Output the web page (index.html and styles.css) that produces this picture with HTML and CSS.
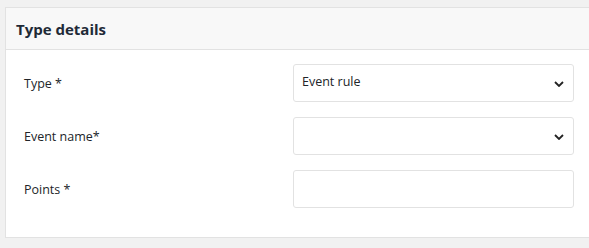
FILE: index.html
```html
<!DOCTYPE html>
<html>
<head>
<meta charset="utf-8">
<link rel="stylesheet" href="styles.css">
</head>
<body>
<div class="card">
  <div class="card-header">Type details</div>
  <div class="card-body">
    <label class="label">Type *</label>
    <div class="select">
      <span class="value">Event rule</span>
      <svg class="chev" width="10" height="6" viewBox="0 0 10 6"><path d="M1 1 L5 5 L9 1" fill="none" stroke="#222" stroke-width="1.8"/></svg>
    </div>
    <label class="label">Event name*</label>
    <div class="select">
      <span class="value"></span>
      <svg class="chev" width="10" height="6" viewBox="0 0 10 6"><path d="M1 1 L5 5 L9 1" fill="none" stroke="#222" stroke-width="1.8"/></svg>
    </div>
    <label class="label">Points *</label>
    <div class="input"></div>
  </div>
</div>
</body>
</html>
```

FILE: styles.css
```css
html, body {
  margin: 0;
  padding: 0;
  background: #f1f1f1;
  overflow: hidden;
}
body {
  font-family: "Open Sans", "Noto Sans", sans-serif;
  color: #212529;
}
.card {
  margin: 7px 0 0 5px;
  width: 586px;
  background: #fff;
  border: 1px solid #e2e2e2;
}
.card-header {
  background: #f8f8f8;
  border-bottom: 1px solid #e2e2e2;
  height: 41px;
  padding-left: 10px;
  display: flex;
  align-items: center;
  font-size: 15px;
  font-weight: 700;
  color: #1f2a37;
}
.card-body {
  display: grid;
  grid-template-columns: 269px 281px;
  row-gap: 15px;
  padding: 14px 16px 29px 18px;
  align-items: center;
}
.label {
  font-size: 12.5px;
}
.select, .input {
  height: 36px;
  border: 1px solid #e2e2e2;
  border-radius: 3px;
  display: flex;
  align-items: center;
  justify-content: space-between;
  padding: 0 9px 0 8px;
  font-size: 12.5px;
}
.value {
  margin-top: -3px;
}
.chev {
  display: block;
  margin-top: 1px;
}
```
